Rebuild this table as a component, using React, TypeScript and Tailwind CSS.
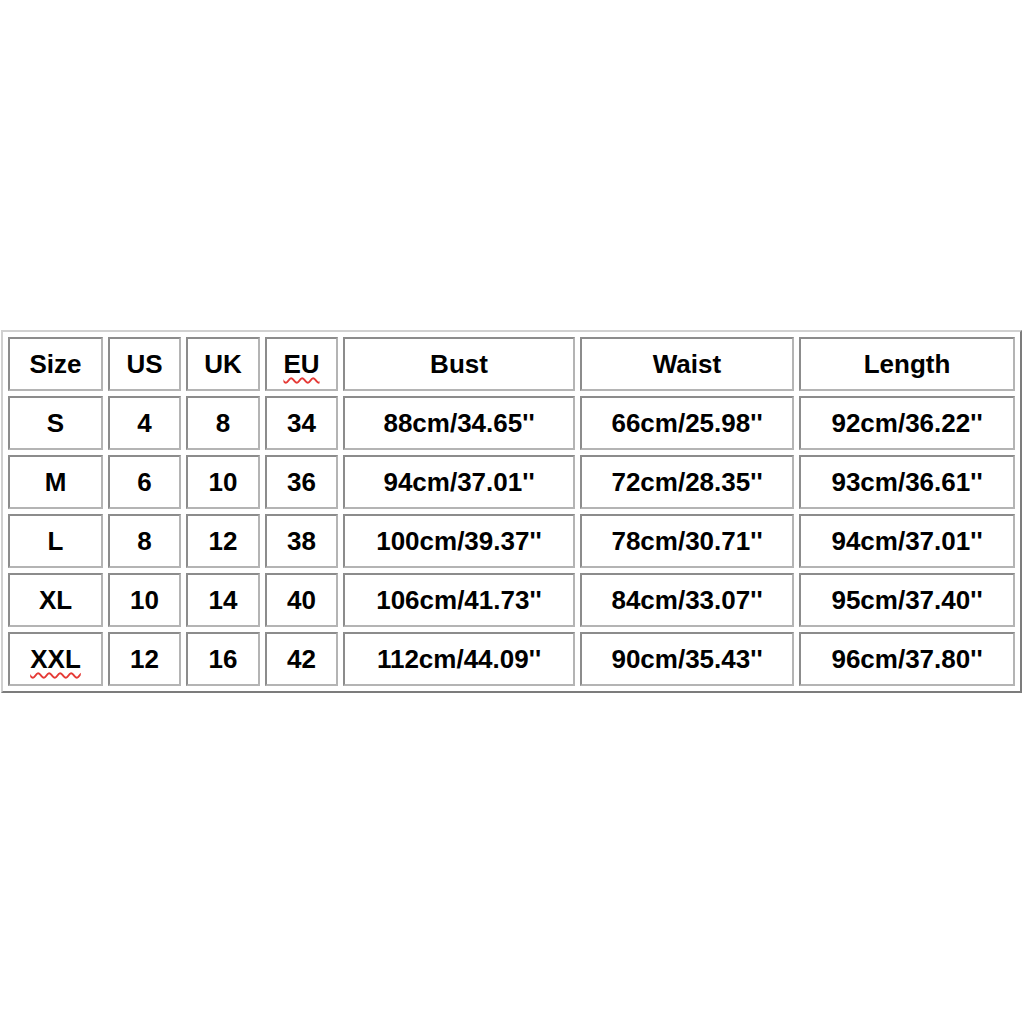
const headers = ["Size", "US", "UK", "EU", "Bust", "Waist", "Length"]

const rows = [
  ["S", "4", "8", "34", "88cm/34.65''", "66cm/25.98''", "92cm/36.22''"],
  ["M", "6", "10", "36", "94cm/37.01''", "72cm/28.35''", "93cm/36.61''"],
  ["L", "8", "12", "38", "100cm/39.37''", "78cm/30.71''", "94cm/37.01''"],
  ["XL", "10", "14", "40", "106cm/41.73''", "84cm/33.07''", "95cm/37.40''"],
  ["XXL", "12", "16", "42", "112cm/44.09''", "90cm/35.43''", "96cm/37.80''"],
]

const widths = ["w-[95px]", "w-[73px]", "w-[74px]", "w-[73px]", "w-[232px]", "w-[214px]", "w-[216px]"]

// spell-check squiggle the source screenshot shows under a few words
const flagged = ["EU", "XXL"]

function Cell({ text, w }: { text: string; w: string }) {
  return (
    <td
      className={`${w} h-[54px] p-0 text-center align-middle border-2 border-t-[#8c8c8c] border-l-[#8c8c8c] border-b-[#b4b4b4] border-r-[#b4b4b4]`}
    >
      {flagged.includes(text) ? (
        <span className="underline decoration-wavy decoration-[#e53935] decoration-[1.5px] underline-offset-[4px]">
          {text}
        </span>
      ) : (
        text
      )}
    </td>
  )
}

export default function App() {
  return (
    <div className="w-[1024px] h-[1024px] bg-white pt-[330px] pl-[1px]">
      <table
        className="w-[1019px] table-fixed border-separate border-spacing-[5px] border-2 border-t-[#d0d0d0] border-l-[#d0d0d0] border-b-[#7c7c7c] border-r-[#7c7c7c] text-[26px] font-bold text-black leading-none"
        style={{ fontFamily: '"Liberation Sans", Arial, sans-serif' }}
      >
        <tbody>
          <tr>
            {headers.map((h, i) => (
              <Cell key={h} text={h} w={widths[i]} />
            ))}
          </tr>
          {rows.map((r) => (
            <tr key={r[0]}>
              {r.map((v, i) => (
                <Cell key={i} text={v} w={widths[i]} />
              ))}
            </tr>
          ))}
        </tbody>
      </table>
    </div>
  )
}
